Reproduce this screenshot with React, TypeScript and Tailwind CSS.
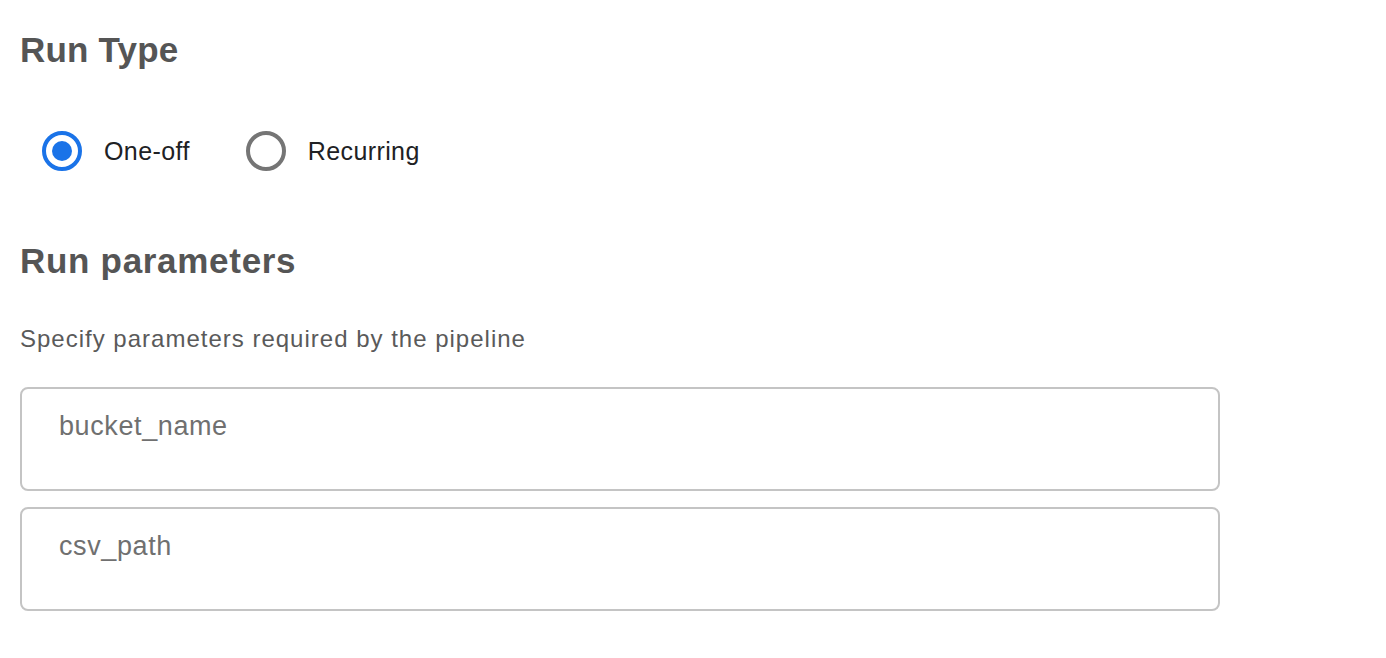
import React from "react";

function Radio({ checked, label }: { checked: boolean; label: string }) {
  return (
    <div className="flex items-center">
      {checked ? (
        <div className="w-[40px] h-[40px] rounded-full border-[4px] border-[#1a73e8] flex items-center justify-center">
          <div className="w-[20px] h-[20px] rounded-full bg-[#1a73e8]" />
        </div>
      ) : (
        <div className="w-[40px] h-[40px] rounded-full border-[4px] border-[#757575]" />
      )}
      <span className="ml-[22px] text-[25px] leading-[30px] tracking-[0.4px] text-[#202124]">{label}</span>
    </div>
  );
}

function Field({ label }: { label: string }) {
  return (
    <div className="w-[1200px] h-[104px] border-2 border-[#c4c4c4] rounded-[8px] pl-[37px] pt-[22px]">
      <span className="text-[27px] leading-[30px] tracking-[0.6px] text-[#707070]">{label}</span>
    </div>
  );
}

export default function App() {
  return (
    <div
      className="w-[1386px] h-[658px] bg-white pl-[20px] pt-[30px] flex flex-col"
      style={{ fontFamily: '"Liberation Sans", Arial, sans-serif' }}
    >
      <h2 className="text-[35px] leading-[40px] font-bold tracking-[0.2px] text-[#555555]">Run Type</h2>
      <div className="mt-[61px] ml-[22px] flex items-center gap-[56px]">
        <Radio checked label="One-off" />
        <Radio checked={false} label="Recurring" />
      </div>
      <h2 className="mt-[70px] text-[35px] leading-[40px] font-bold tracking-[0.7px] text-[#555555]">Run parameters</h2>
      <p className="mt-[44px] text-[24px] leading-[28px] tracking-[1px] text-[#5a5a5a]">
        Specify parameters required by the pipeline
      </p>
      <div className="mt-[34px] flex flex-col gap-[16px]">
        <Field label="bucket_name" />
        <Field label="csv_path" />
      </div>
    </div>
  );
}
